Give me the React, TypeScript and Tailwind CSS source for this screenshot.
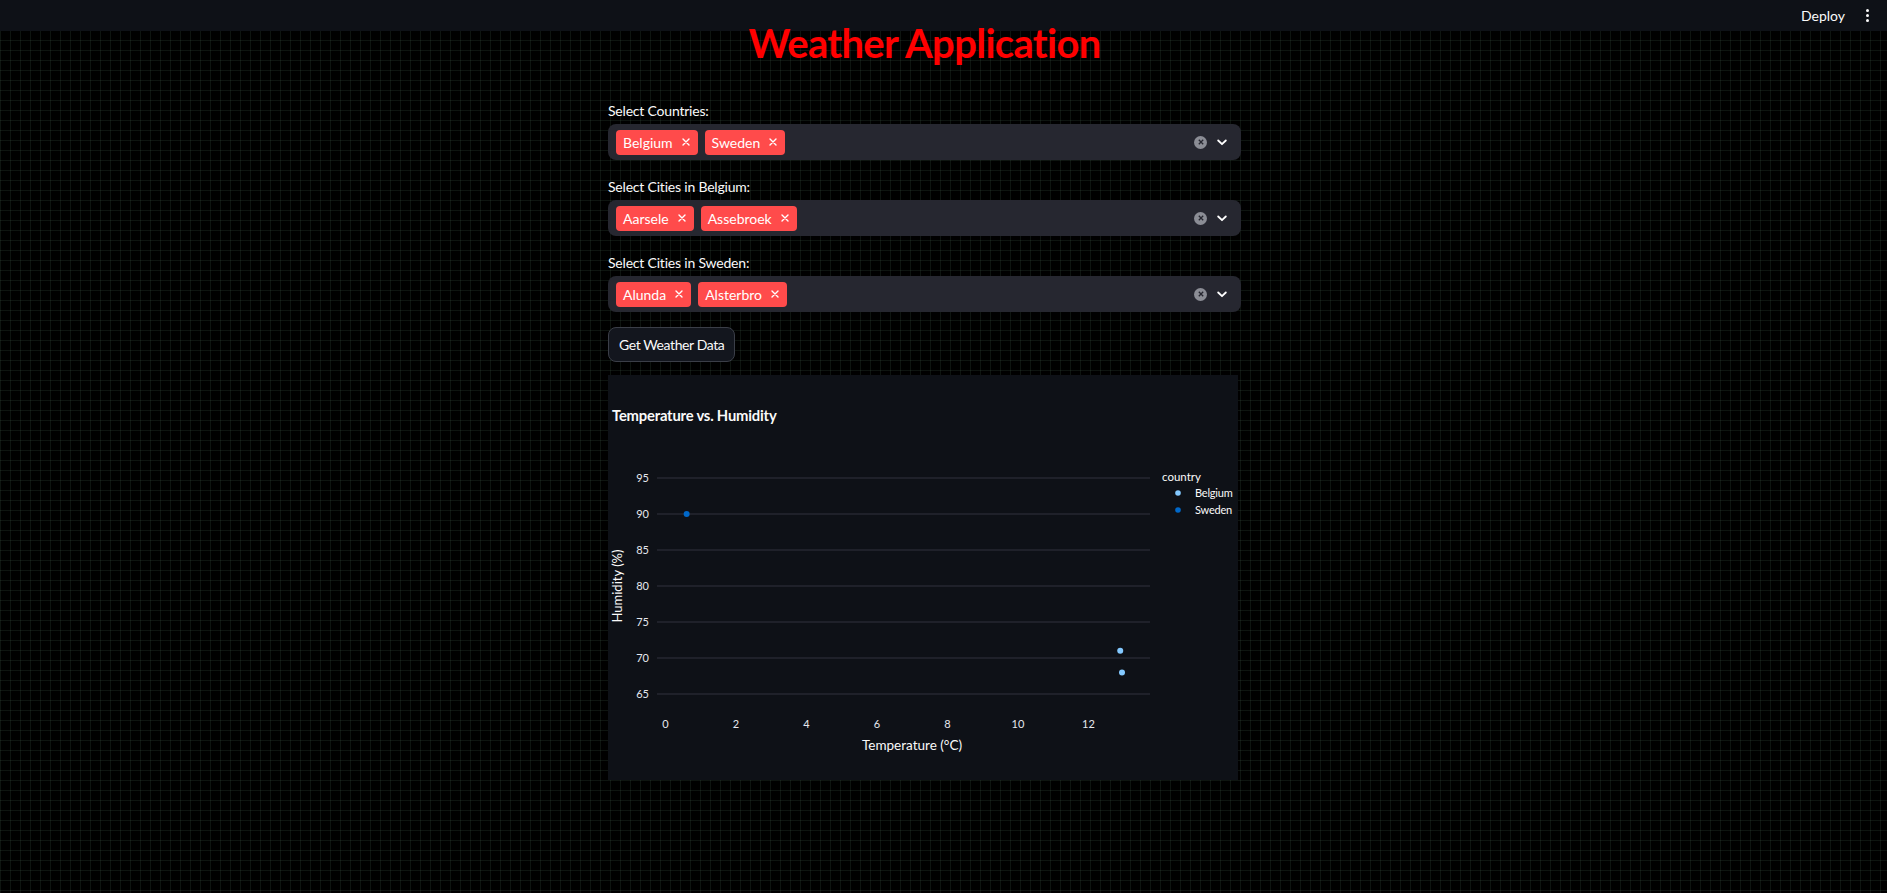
import React from 'react';

const FONT = "font-['Lato','Liberation_Sans',sans-serif]";

function TagX() {
  return (
    <svg width="8" height="8" viewBox="0 0 8 8" className="shrink-0">
      <path d="M1 1L7 7M7 1L1 7" stroke="#ffffff" strokeWidth="1.4" strokeLinecap="round" />
    </svg>
  );
}

function MultiSelect({ label, tags }: { label: string; tags: string[] }) {
  return (
    <div>
      <div className="h-[21px] mb-[3px] text-[14px] leading-[21px] text-[#fafafa] tracking-[-0.2px]">{label}</div>
      <div className="h-[36px] rounded-lg bg-[#262730] flex items-center pl-[8px] pr-[14px]">
        <div className="flex flex-1 gap-[7px]">
          {tags.map((t) => (
            <span
              key={t}
              className="h-[25px] rounded-[4px] bg-[#ff4b4b] text-white text-[14px] flex items-center pl-[7px] pr-[8px] gap-[9px]"
            >
              {t}
              <TagX />
            </span>
          ))}
        </div>
        <div className="flex items-center gap-[10px]">
          <span className="w-[13px] h-[13px] rounded-full bg-[#8b8d95] flex items-center justify-center">
            <svg width="6" height="6" viewBox="0 0 6 6">
              <path d="M0.8 0.8L5.2 5.2M5.2 0.8L0.8 5.2" stroke="#262730" strokeWidth="1.3" />
            </svg>
          </span>
          <svg width="10" height="7" viewBox="0 0 10 7">
            <path d="M1.2 1.5L5 5.2L8.8 1.5" stroke="#ffffff" strokeWidth="1.8" fill="none" strokeLinecap="round" strokeLinejoin="round" />
          </svg>
        </div>
      </div>
    </div>
  );
}

function Chart() {
  const yTicks = [95, 90, 85, 80, 75, 70, 65];
  const xTicks = [0, 2, 4, 6, 8, 10, 12];
  const y = (h: number) => 319 - (h - 65) * 7.2;
  const x = (t: number) => 57.5 + t * 35.25;
  const points = [
    { t: 0.6, h: 90, c: '#0068c9' },
    { t: 12.9, h: 71, c: '#83c9ff' },
    { t: 12.95, h: 68, c: '#83c9ff' },
  ];
  return (
    <div className="w-[630px] h-[405px] bg-[#0e1117]">
      <svg width="630" height="405" overflow="visible" fontFamily="Lato, 'Liberation Sans', sans-serif">
        <text x="4" y="46" fill="#fafafa" fontSize="14.8" fontWeight="700" letterSpacing="-0.2">
          Temperature vs. Humidity
        </text>
        {yTicks.map((v) => (
          <g key={v}>
            <line x1="49" x2="542" y1={y(v)} y2={y(v)} stroke="#31333f" strokeWidth="1" />
            <text x="41" y={y(v) + 4} fill="#e6e8ee" fontSize="11" textAnchor="end">
              {v}
            </text>
          </g>
        ))}
        {xTicks.map((v) => (
          <text key={v} x={x(v)} y="353" fill="#e6e8ee" fontSize="11" textAnchor="middle">
            {v}
          </text>
        ))}
        <text x="304" y="375" fill="#fafafa" fontSize="13.5" textAnchor="middle">
          Temperature (°C)
        </text>
        <text
          x="0"
          y="0"
          fill="#fafafa"
          fontSize="13"
          textAnchor="middle"
          transform="translate(14 211) rotate(-90)"
        >
          Humidity (%)
        </text>
        {points.map((p, i) => (
          <circle key={i} cx={x(p.t)} cy={y(p.h)} r="3" fill={p.c} />
        ))}
        <text x="554" y="106" fill="#fafafa" fontSize="11.5">
          country
        </text>
        <circle cx="570" cy="118" r="2.8" fill="#83c9ff" />
        <text x="587" y="122" fill="#fafafa" fontSize="11" letterSpacing="-0.2">
          Belgium
        </text>
        <circle cx="570" cy="135" r="2.8" fill="#0068c9" />
        <text x="587" y="139" fill="#fafafa" fontSize="11" letterSpacing="-0.2">
          Sweden
        </text>
      </svg>
    </div>
  );
}

export default function App() {
  return (
    <div
      className={`min-h-screen w-full bg-black bg-[linear-gradient(rgba(70,100,80,0.2)_1px,transparent_1px),linear-gradient(90deg,rgba(70,100,80,0.2)_1px,transparent_1px)] bg-size-[10px_10px] ${FONT}`}
    >
      <header className="h-[31px] bg-[#0e1117] flex items-center justify-end pr-[18px] gap-[21px]">
        <span className="text-[14px] text-[#fafafa]">Deploy</span>
        <span className="flex flex-col gap-[2px] items-center">
          <span className="w-[3px] h-[3px] rounded-full bg-[#fafafa]" />
          <span className="w-[3px] h-[3px] rounded-full bg-[#fafafa]" />
          <span className="w-[3px] h-[3px] rounded-full bg-[#fafafa]" />
        </span>
      </header>

      <div className="flex justify-center pr-[38px]">
        <div className="w-[633px]">
          <h1 className="text-center text-[40px] leading-[24px] tracking-[-0.7px] font-bold text-[#ff0000]">
            Weather Application
          </h1>

          <div className="pt-[45px] flex flex-col gap-[16px]">
            <MultiSelect label="Select Countries:" tags={['Belgium', 'Sweden']} />
            <MultiSelect label="Select Cities in Belgium:" tags={['Aarsele', 'Assebroek']} />
            <MultiSelect label="Select Cities in Sweden:" tags={['Alunda', 'Alsterbro']} />
          </div>

          <button className="mt-[15px] h-[35px] px-[10px] rounded-lg border border-[#3b3e48] bg-[#13161e] text-[14px] tracking-[-0.4px] text-[#fafafa]">
            Get Weather Data
          </button>

          <div className="mt-[13px] pb-[113px]">
            <Chart />
          </div>
        </div>
      </div>
    </div>
  );
}
